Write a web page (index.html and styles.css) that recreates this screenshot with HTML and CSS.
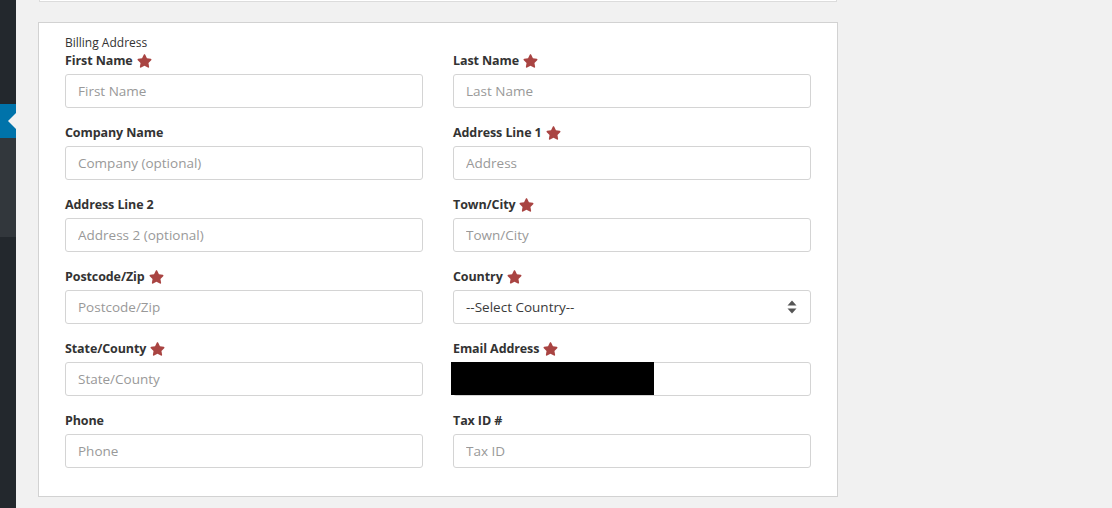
FILE: index.html
```html
<!DOCTYPE html>
<html>
<head>
<meta charset="utf-8">
<link rel="stylesheet" href="styles.css">
</head>
<body>
<div class="layout">
  <aside class="sidebar">
    <div class="sb-top"></div>
    <div class="sb-active"><span class="notch"></span></div>
    <div class="sb-sub"></div>
    <div class="sb-rest"></div>
  </aside>
  <main class="main">
    <div class="prev-card"></div>
    <section class="card">
      <div class="legend">Billing Address</div>
      <div class="grid">
        <div class="field">
          <label class="lbl">First Name <svg class="star" viewBox="0 0 576 512"><path d="M259.3 17.8L194 150.2 47.9 171.5c-26.2 3.8-36.7 36.1-17.7 54.6l105.7 103-25 145.5c-4.5 26.3 23.2 46 46.4 33.7L288 439.6l130.7 68.7c23.2 12.2 50.9-7.4 46.4-33.7l-25-145.5 105.7-103c19-18.5 8.5-50.8-17.7-54.6L382 150.2 316.7 17.8c-11.7-23.6-45.6-23.9-57.4 0z"/></svg></label>
          <input class="inp" placeholder="First Name">
        </div>
        <div class="field">
          <label class="lbl">Last Name <svg class="star" viewBox="0 0 576 512"><path d="M259.3 17.8L194 150.2 47.9 171.5c-26.2 3.8-36.7 36.1-17.7 54.6l105.7 103-25 145.5c-4.5 26.3 23.2 46 46.4 33.7L288 439.6l130.7 68.7c23.2 12.2 50.9-7.4 46.4-33.7l-25-145.5 105.7-103c19-18.5 8.5-50.8-17.7-54.6L382 150.2 316.7 17.8c-11.7-23.6-45.6-23.9-57.4 0z"/></svg></label>
          <input class="inp" placeholder="Last Name">
        </div>
        <div class="field">
          <label class="lbl">Company Name</label>
          <input class="inp" placeholder="Company (optional)">
        </div>
        <div class="field">
          <label class="lbl">Address Line 1 <svg class="star" viewBox="0 0 576 512"><path d="M259.3 17.8L194 150.2 47.9 171.5c-26.2 3.8-36.7 36.1-17.7 54.6l105.7 103-25 145.5c-4.5 26.3 23.2 46 46.4 33.7L288 439.6l130.7 68.7c23.2 12.2 50.9-7.4 46.4-33.7l-25-145.5 105.7-103c19-18.5 8.5-50.8-17.7-54.6L382 150.2 316.7 17.8c-11.7-23.6-45.6-23.9-57.4 0z"/></svg></label>
          <input class="inp" placeholder="Address">
        </div>
        <div class="field">
          <label class="lbl">Address Line 2</label>
          <input class="inp" placeholder="Address 2 (optional)">
        </div>
        <div class="field">
          <label class="lbl">Town/City <svg class="star" viewBox="0 0 576 512"><path d="M259.3 17.8L194 150.2 47.9 171.5c-26.2 3.8-36.7 36.1-17.7 54.6l105.7 103-25 145.5c-4.5 26.3 23.2 46 46.4 33.7L288 439.6l130.7 68.7c23.2 12.2 50.9-7.4 46.4-33.7l-25-145.5 105.7-103c19-18.5 8.5-50.8-17.7-54.6L382 150.2 316.7 17.8c-11.7-23.6-45.6-23.9-57.4 0z"/></svg></label>
          <input class="inp" placeholder="Town/City">
        </div>
        <div class="field">
          <label class="lbl">Postcode/Zip <svg class="star" viewBox="0 0 576 512"><path d="M259.3 17.8L194 150.2 47.9 171.5c-26.2 3.8-36.7 36.1-17.7 54.6l105.7 103-25 145.5c-4.5 26.3 23.2 46 46.4 33.7L288 439.6l130.7 68.7c23.2 12.2 50.9-7.4 46.4-33.7l-25-145.5 105.7-103c19-18.5 8.5-50.8-17.7-54.6L382 150.2 316.7 17.8c-11.7-23.6-45.6-23.9-57.4 0z"/></svg></label>
          <input class="inp" placeholder="Postcode/Zip">
        </div>
        <div class="field">
          <label class="lbl">Country <svg class="star" viewBox="0 0 576 512"><path d="M259.3 17.8L194 150.2 47.9 171.5c-26.2 3.8-36.7 36.1-17.7 54.6l105.7 103-25 145.5c-4.5 26.3 23.2 46 46.4 33.7L288 439.6l130.7 68.7c23.2 12.2 50.9-7.4 46.4-33.7l-25-145.5 105.7-103c19-18.5 8.5-50.8-17.7-54.6L382 150.2 316.7 17.8c-11.7-23.6-45.6-23.9-57.4 0z"/></svg></label>
          <div class="select">
            <span class="sel-text">--Select Country--</span>
            <svg class="sort" viewBox="0 0 10 14"><path d="M5 0.5L9.5 5.5H0.5Z"/><path d="M5 13.5L9.5 8.5H0.5Z"/></svg>
          </div>
        </div>
        <div class="field">
          <label class="lbl">State/County <svg class="star" viewBox="0 0 576 512"><path d="M259.3 17.8L194 150.2 47.9 171.5c-26.2 3.8-36.7 36.1-17.7 54.6l105.7 103-25 145.5c-4.5 26.3 23.2 46 46.4 33.7L288 439.6l130.7 68.7c23.2 12.2 50.9-7.4 46.4-33.7l-25-145.5 105.7-103c19-18.5 8.5-50.8-17.7-54.6L382 150.2 316.7 17.8c-11.7-23.6-45.6-23.9-57.4 0z"/></svg></label>
          <input class="inp" placeholder="State/County">
        </div>
        <div class="field">
          <label class="lbl">Email Address <svg class="star" viewBox="0 0 576 512"><path d="M259.3 17.8L194 150.2 47.9 171.5c-26.2 3.8-36.7 36.1-17.7 54.6l105.7 103-25 145.5c-4.5 26.3 23.2 46 46.4 33.7L288 439.6l130.7 68.7c23.2 12.2 50.9-7.4 46.4-33.7l-25-145.5 105.7-103c19-18.5 8.5-50.8-17.7-54.6L382 150.2 316.7 17.8c-11.7-23.6-45.6-23.9-57.4 0z"/></svg></label>
          <div class="inp-wrap">
            <input class="inp">
            <span class="redact"></span>
          </div>
        </div>
        <div class="field">
          <label class="lbl">Phone</label>
          <input class="inp" placeholder="Phone">
        </div>
        <div class="field">
          <label class="lbl">Tax ID #</label>
          <input class="inp" placeholder="Tax ID">
        </div>
      </div>
    </section>
  </main>
</div>
</body>
</html>
```
FILE: styles.css
```css
* { box-sizing: border-box; }
html, body { margin: 0; padding: 0; }
body {
  background: #f1f1f1;
  font-family: "Open Sans", "Noto Sans", sans-serif;
  color: #32373c;
  width: 1112px;
  height: 508px;
  overflow: hidden;
}
.layout { display: flex; height: 508px; }
.sidebar {
  width: 16px;
  flex: 0 0 16px;
  display: flex;
  flex-direction: column;
}
.sb-top { height: 104px; background: #23282d; }
.sb-active { height: 34px; background: #0073aa; position: relative; }
.notch {
  position: absolute;
  right: 0;
  top: 9px;
  width: 0; height: 0;
  border-top: 8px solid transparent;
  border-bottom: 8px solid transparent;
  border-right: 8px solid #f1f1f1;
}
.sb-sub { height: 99px; background: #32373c; }
.sb-rest { flex: 1; background: #23282d; }
.main { flex: 1; padding-left: 22px; }
.prev-card {
  height: 2px;
  background: #fff;
  border: 1px solid #dcdcdc;
  border-top: 0;
  margin-left: 1px;
  width: 798px;
}
.card {
  margin-top: 20px;
  width: 800px;
  height: 475px;
  background: #fff;
  border: 1px solid #d2d2d2;
  padding: 11px 26px 0 26px;
}
.legend {
  font-size: 12px;
  line-height: 17px;
  color: #333;
}
.grid {
  display: grid;
  grid-template-columns: 358px 358px;
  column-gap: 30px;
  row-gap: 15px;
}
.field { display: flex; flex-direction: column; }
.lbl {
  font-size: 12.5px;
  font-weight: 700;
  line-height: 17px;
  height: 18px;
  padding-top: 1px;
  margin-bottom: 5px;
  color: #333;
  display: flex;
  align-items: center;
  gap: 4px;
  letter-spacing: -0.1px;
}
.star { width: 15px; height: 14px; fill: #a94442; }
.inp {
  height: 34px;
  width: 100%;
  border: 1px solid #d4d4d4;
  border-radius: 3px;
  padding: 0 12px;
  font-family: "Open Sans", "Noto Sans", sans-serif;
  font-size: 13.5px;
  color: #555;
  background: #fff;
  outline: none;
}
.inp::placeholder { color: #999; }
.select {
  height: 34px;
  border: 1px solid #d4d4d4;
  border-radius: 3px;
  padding: 0 12px;
  display: flex;
  align-items: center;
  justify-content: space-between;
  font-size: 13.5px;
  color: #3a3a3a;
}
.sort { width: 10px; height: 14px; fill: #555; margin-right: 1px; }
.inp-wrap { position: relative; height: 34px; }
.redact {
  position: absolute;
  left: -2px;
  top: 0;
  width: 203px;
  height: 33px;
  background: #000;
}
```
